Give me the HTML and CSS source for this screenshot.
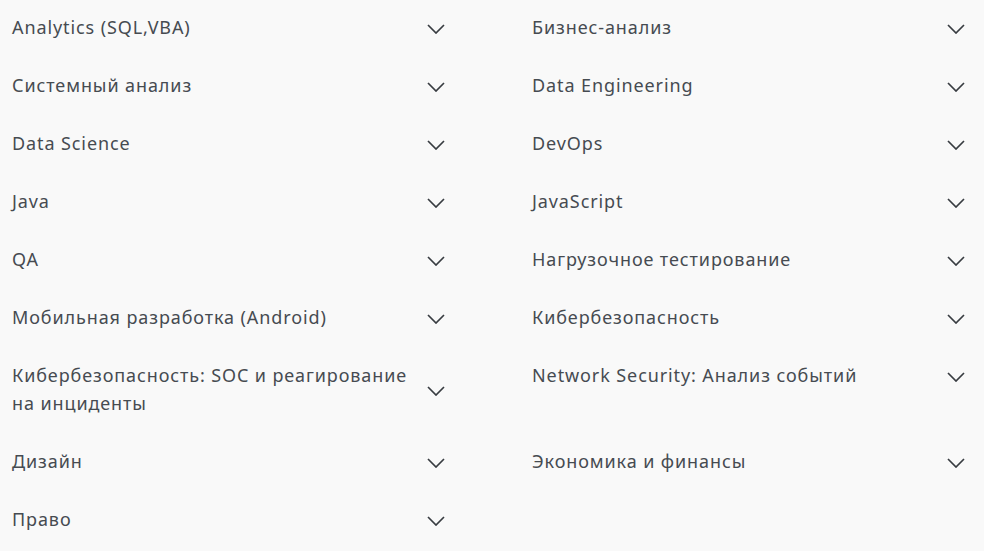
FILE: index.html
```
<!DOCTYPE html>
<html>
<head>
	<title>Направления</title>
	<link rel="stylesheet" href="styles.css">
</head>
<body>
	<div class="directions">
		<div class="item"><span>Analytics (SQL,VBA)</span><svg class="chevron" viewBox="0 0 18 10"><path d="M1 1l8 8 8-8"/></svg></div>
		<div class="item"><span>Бизнес-анализ</span><svg class="chevron" viewBox="0 0 18 10"><path d="M1 1l8 8 8-8"/></svg></div>
		<div class="item"><span>Системный анализ</span><svg class="chevron" viewBox="0 0 18 10"><path d="M1 1l8 8 8-8"/></svg></div>
		<div class="item"><span>Data Engineering</span><svg class="chevron" viewBox="0 0 18 10"><path d="M1 1l8 8 8-8"/></svg></div>
		<div class="item"><span>Data Science</span><svg class="chevron" viewBox="0 0 18 10"><path d="M1 1l8 8 8-8"/></svg></div>
		<div class="item"><span>DevOps</span><svg class="chevron" viewBox="0 0 18 10"><path d="M1 1l8 8 8-8"/></svg></div>
		<div class="item"><span>Java</span><svg class="chevron" viewBox="0 0 18 10"><path d="M1 1l8 8 8-8"/></svg></div>
		<div class="item"><span>JavaScript</span><svg class="chevron" viewBox="0 0 18 10"><path d="M1 1l8 8 8-8"/></svg></div>
		<div class="item"><span>QA</span><svg class="chevron" viewBox="0 0 18 10"><path d="M1 1l8 8 8-8"/></svg></div>
		<div class="item"><span>Нагрузочное тестирование</span><svg class="chevron" viewBox="0 0 18 10"><path d="M1 1l8 8 8-8"/></svg></div>
		<div class="item"><span>Мобильная разработка (Android)</span><svg class="chevron" viewBox="0 0 18 10"><path d="M1 1l8 8 8-8"/></svg></div>
		<div class="item"><span>Кибербезопасность</span><svg class="chevron" viewBox="0 0 18 10"><path d="M1 1l8 8 8-8"/></svg></div>
		<div class="item"><span>Кибербезопасность: SOC и реагирование на инциденты</span><svg class="chevron" viewBox="0 0 18 10"><path d="M1 1l8 8 8-8"/></svg></div>
		<div class="item"><span>Network Security: Анализ событий</span><svg class="chevron" viewBox="0 0 18 10"><path d="M1 1l8 8 8-8"/></svg></div>
		<div class="item"><span>Дизайн</span><svg class="chevron" viewBox="0 0 18 10"><path d="M1 1l8 8 8-8"/></svg></div>
		<div class="item"><span>Экономика и финансы</span><svg class="chevron" viewBox="0 0 18 10"><path d="M1 1l8 8 8-8"/></svg></div>
		<div class="item"><span>Право</span><svg class="chevron" viewBox="0 0 18 10"><path d="M1 1l8 8 8-8"/></svg></div>
	</div>
</body>
</html>
```
FILE: styles.css
```
body{
	margin: 0;
	background-color: #f9f9f9;
	font-family: "Noto Sans", Arial, sans-serif;
	color: #464b51;
}
.directions{
	display: grid;
	grid-template-columns: 434px 434px;
	column-gap: 86px;
	align-items: start;
	padding-left: 12px;
}
.item{
	display: flex;
	justify-content: space-between;
	align-items: center;
	padding: 13px 0 17px;
	font-size: 18px;
	line-height: 28px;
	letter-spacing: 0.9px;
}
.item span{
	max-width: 408px;
}
.chevron{
	width: 18px;
	height: 10px;
	margin-top: 3px;
	margin-right: 1px;
	flex-shrink: 0;
	fill: none;
	stroke: #383c41;
	stroke-width: 1.7;
}
```
